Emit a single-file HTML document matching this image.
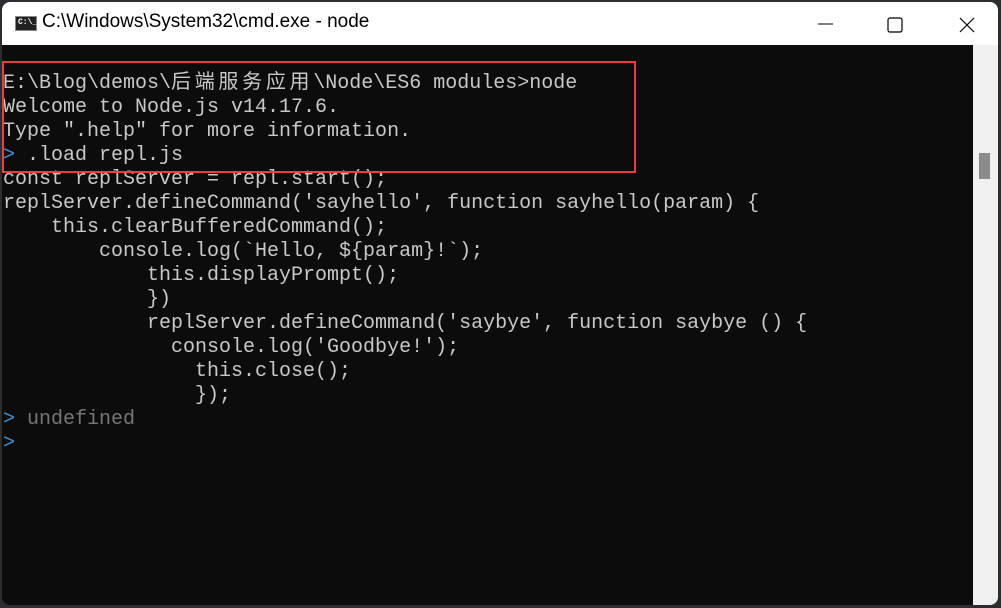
<!DOCTYPE html>
<html><head><meta charset="utf-8"><style>
html,body{margin:0;padding:0;width:1001px;height:608px;overflow:hidden;background:#2b2d30;}
.win{position:absolute;left:2px;top:2px;width:996px;height:603px;background:#0c0c0c;border-radius:8px 8px 8px 8px;overflow:hidden;}
.title{position:absolute;left:0;top:0;width:996px;height:43px;background:#fff;}
.title .t{position:absolute;left:40px;top:9px;font:19px "Liberation Sans",sans-serif;color:#000;}
.ico{position:absolute;left:13px;top:14px;width:22px;height:15px;background:#222;border:1px solid #888;box-sizing:border-box;}
.ico span{position:absolute;left:2px;top:1px;font:bold 8px "Liberation Mono",monospace;color:#fff;}
.sb{position:absolute;left:971px;top:43px;width:25px;height:560px;background:#f0f0f0;}
pre{position:absolute;left:1px;top:66px;margin:0;font:20px/24px "Liberation Mono","Noto Sans CJK SC",monospace;color:#c8c8c8;white-space:pre;}
.cj{font-family:"Noto Sans CJK SC",sans-serif;font-size:20px;letter-spacing:3.7px;}
.p{color:#3a96dd}.g{color:#767676}
.red{position:absolute;left:0px;top:59px;width:630px;height:108px;border:2px solid #ee3b3b;}
</style></head><body>
<div class="win">
<div class="title"><div class="ico"><span>C:\_</span></div><div class="t">C:\Windows\System32\cmd.exe - node</div>
<svg style="position:absolute;left:808px;top:12px" width="180" height="22"><line x1="8" y1="10" x2="23" y2="10" stroke="#000" stroke-width="1"/><rect x="78" y="4" width="14" height="14" rx="2" fill="none" stroke="#000" stroke-width="1.2"/><path d="M150 4 L164 18 M164 4 L150 18" stroke="#000" stroke-width="1.2"/></svg></div>
<div class="sb"></div><div style="position:absolute;left:977px;top:151px;width:11px;height:26px;background:#8b8b8b"></div>
<pre>E:\Blog\demos\<span class="cj">后端服务应用</span>\Node\ES6 modules&gt;node
Welcome to Node.js v14.17.6.
Type ".help" for more information.
<span class="p">&gt;</span> .load repl.js
const replServer = repl.start();
replServer.defineCommand('sayhello', function sayhello(param) {
    this.clearBufferedCommand();
        console.log(`Hello, ${param}!`);
            this.displayPrompt();
            })
            replServer.defineCommand('saybye', function saybye () {
              console.log('Goodbye!');
                this.close();
                });
<span class="p">&gt;</span> <span class="g">undefined</span>
<span class="p">&gt;</span></pre>
<div class="red"></div>
</div>
</body></html>
